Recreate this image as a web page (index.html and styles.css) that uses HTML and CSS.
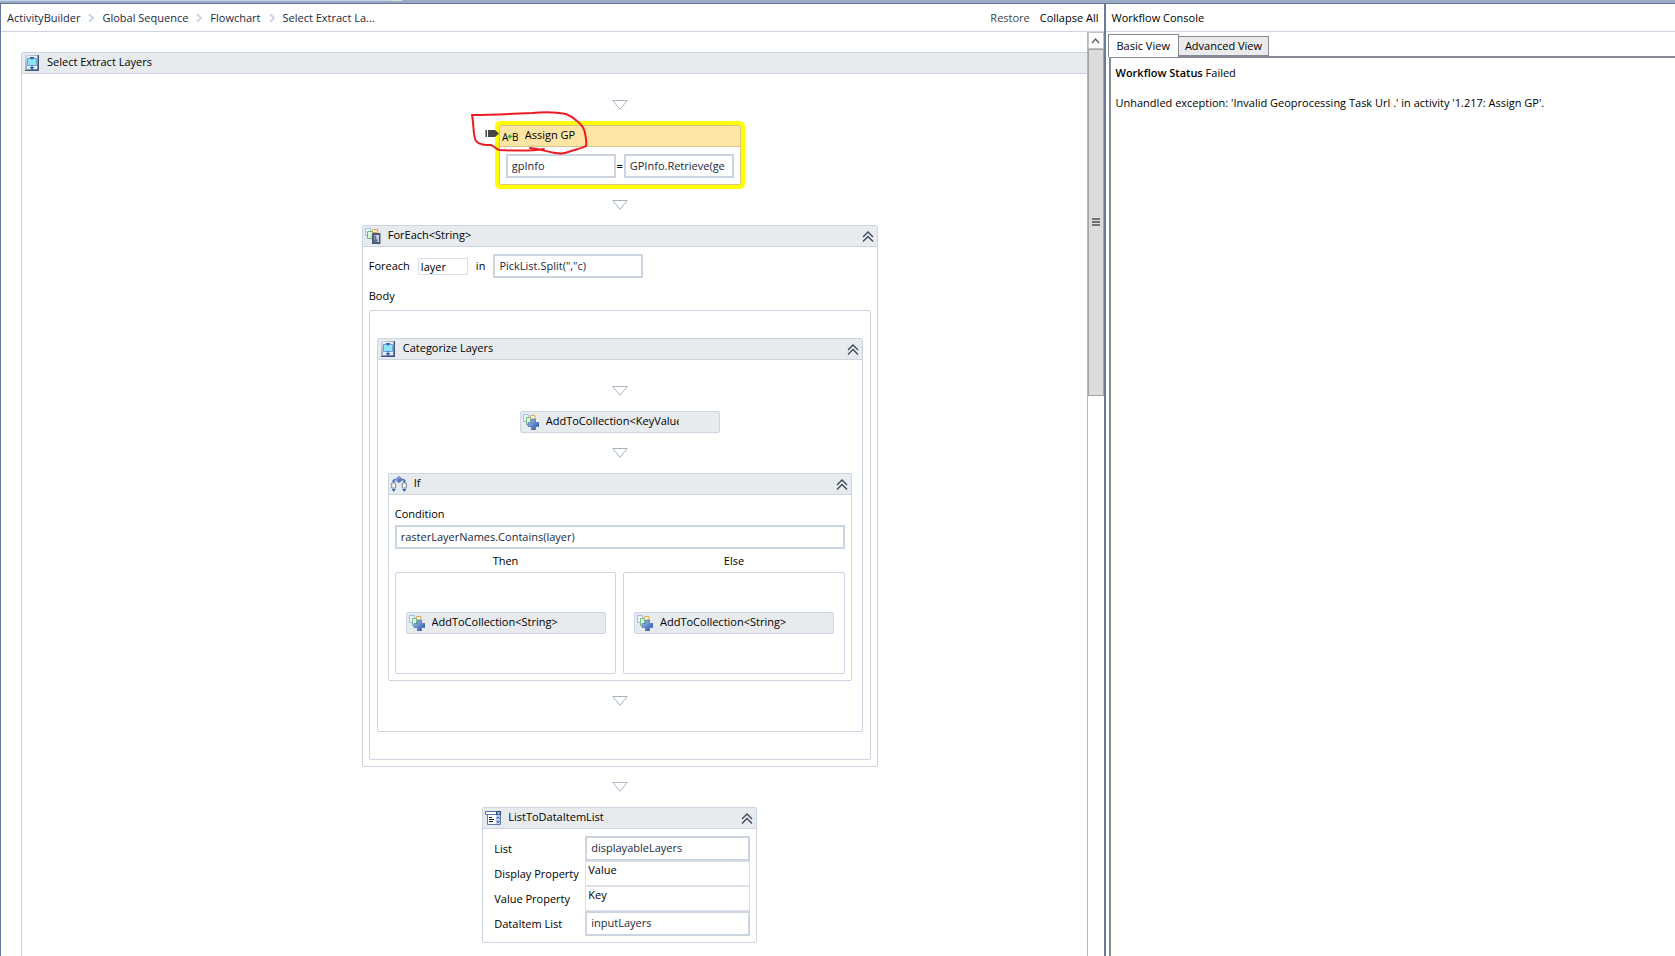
FILE: index.html
```
<!DOCTYPE html>
<html lang="en">
<head>
    <meta charset="UTF-8" />
    <title>Workflow Designer</title>
    <link rel="stylesheet" href="styles.css">
</head>

<body>
    <!-- shared icons -->
    <svg class="defs" width="0" height="0" aria-hidden="true">
        <defs>
            <linearGradient id="blue" x1="0" y1="0" x2="1" y2="1">
                <stop offset="0" stop-color="#a9c4f2" />
                <stop offset="1" stop-color="#234a9e" />
            </linearGradient>
            <linearGradient id="steel" x1="0" y1="0" x2="1" y2="1">
                <stop offset="0" stop-color="#d4deee" />
                <stop offset="1" stop-color="#566b98" />
            </linearGradient>
        </defs>
        <symbol id="down" viewBox="0 0 16 10">
            <path d="M.8.5h14.4L8 9.3z" fill="#fff" stroke="#a9b3c6" />
        </symbol>
        <symbol id="chevrons" viewBox="0 0 12 11">
            <path d="M1 6l5-5 5 5M1 10.500l5-5 5 5" fill="none" stroke="#3c475c" stroke-width="1.300" />
        </symbol>
        <symbol id="sequence" viewBox="0 0 16 16">
            <path d="M1 0h14v16H1z" fill="url(#steel)" />
            <path d="M14.500 0v15.500H1" fill="none" stroke="#43557c" />
            <path d="M3 1h10v13H3z" fill="#e6eefb" />
            <path d="M3.500 3.500h9v7h-9z" fill="#8fe4f4" stroke="#6d9fd0" />
            <path d="M5.500 2h5L8 5zM5.500 12h5L8 15z" fill="#2f5fc0" />
            <path d="M8 10v2" stroke="#2f5fc0" />
        </symbol>
        <symbol id="foreach" viewBox="0 0 16 16">
            <path d="M.5.5h5v7h-5z" fill="#eef4ff" stroke="#a9bfe2" />
            <path d="M2.500 3.500h5v7h-5z" fill="#d9f3dc" stroke="#62b877" />
            <path d="M7.500 1.500h5v3h-5z" fill="#fdf0cf" stroke="#d9a95a" />
            <path d="M7 5h8.500v11H7z" fill="#4c5a76" />
            <path d="M9 7h5v7H9z" fill="#c5d0e4" />
            <path d="M6.500 8.500h4v5M8.500 11.500l2 2.500 2-2.500" fill="none" stroke="#5c6c8c" stroke-width="1.500" />
        </symbol>
        <symbol id="add" viewBox="0 0 16 16">
            <path d="M.5.500h5v7h-5z" fill="#eef4ff" stroke="#a3bce4" />
            <path d="M7.500 1.500h4.500v5H7.500z" fill="#fdf0cf" stroke="#dcae5c" />
            <path d="M3.500 3.500h4v7h-4z" fill="#e3f6e5" stroke="#71bd86" />
            <path d="M8.500 5h4v3.500H16v4h-3.500V16h-4v-3.500H5v-4h3.500z" fill="url(#blue)" stroke="#3d66b4" stroke-width=".6" />
        </symbol>
        <symbol id="if" viewBox="0 0 16 16">
            <path d="M2.700 6V3.500h10.600V6" fill="none" stroke="#5d6f92" />
            <path d="M8 0l4 3.500L8 7 4 3.500z" fill="url(#blue)" stroke="#7086b4" stroke-width=".5" />
            <path d="M.7 7h4v5h-4zM11.300 7h4v5h-4z" fill="#fff" stroke="#7d8798" />
            <path d="M1 4.500h3.500L2.700 7zM11.500 4.500H15L13.300 7zM.8 13h3.900l-2 3zM11.300 13h4l-2 3z" fill="#2f5fc0" />
        </symbol>
        <symbol id="list" viewBox="0 0 16 14">
            <path d="M.5.5h15v3H.5z" fill="#fff" stroke="#4e70a8" />
            <path d="M2.500 3.500h13v10h-13z" fill="#fff" stroke="#5d7cb0" />
            <path d="M11 4h4v9h-4z" fill="#b9ccf0" />
            <path d="M11 0h5v4h-5z" fill="#33517f" />
            <path d="M12 1.500h3l-1.500 2z" fill="#fff" />
            <path d="M4 6.500h3M4 8.500h5M4 10.500h4" stroke="#222" />
            <path d="M12 7.500l1.200-1.500 1.300 1.500M12 10l1.200 1.500 1.300-1.500" fill="none" stroke="#223a6e" />
        </symbol>
    </svg>

    <div class="topstrip"><div class="topstrip-tab"></div></div>

    <div class="window">
        <main class="designer">
            <div class="bar">
                <nav class="crumbs">
                    <a href="#">ActivityBuilder</a>
                    <svg width="6" height="8" viewBox="0 0 6 8"><path d="M1 0l4 4-4 4" /></svg>
                    <a href="#">Global Sequence</a>
                    <svg width="6" height="8" viewBox="0 0 6 8"><path d="M1 0l4 4-4 4" /></svg>
                    <a href="#">Flowchart</a>
                    <svg width="6" height="8" viewBox="0 0 6 8"><path d="M1 0l4 4-4 4" /></svg>
                    <a href="#">Select Extract La...</a>
                </nav>
                <button type="button" class="restore">Restore</button>
                <button type="button">Collapse All</button>
            </div>

            <div class="viewport">
                <div class="canvas">
                    <section class="card root">
                        <header class="card-head"><svg class="icon"><use href="#sequence" /></svg><span class="title">Select Extract Layers</span></header>
                        <div class="flow">
                            <svg class="arrow"><use href="#down" /></svg>

                            <section class="card assign">
                                <header class="card-head">
                                    <svg class="icon" viewBox="0 0 16 16">
                                        <text x="0" y="13">A</text>
                                        <text x="10" y="13">B</text>
                                        <path d="M10.500 8.500h-4M8.500 6.500l-2 2 2 2" fill="none" stroke="#3fae49" stroke-width="1.300" />
                                    </svg>
                                    <span class="title">Assign GP</span>
                                </header>
                                <div class="assign-row">
                                    <input class="expr" type="text" value="gpInfo" aria-label="To">
                                    <span>=</span>
                                    <input class="expr" type="text" value="GPInfo.Retrieve(ge" aria-label="Value">
                                </div>
                                <svg class="pointer" width="14" height="8" viewBox="0 0 14 8"><path d="M0 0h1v7H0z" fill="#999" /><path d="M1 0h1v7H1zM3 0h7l4 3.500L10 7H3z" fill="#454545" /></svg>
                                <svg class="scribble" width="120" height="46" viewBox="0 0 120 46">
                                    <path d="M75 38c-12 2-24 2-45 1-3-1-5-4-8-5-6 0-12 0-15-4C4 26 5 14 3 4c20 0 40-1 60-2 12-1 24-1 34 1 5 2 8 4 11 7 4 3 7 6 8 12 1 6 2 10 1 13-3 2-9 3-15 5-6 2-8 3-16 2-8-1-14-4-25-5" fill="none" stroke="#ed1c24" stroke-width="2" stroke-linecap="round" stroke-linejoin="round" />
                                </svg>
                            </section>

                            <svg class="arrow"><use href="#down" /></svg>

                            <section class="card foreach">
                                <header class="card-head">
                                    <svg class="icon"><use href="#foreach" /></svg>
                                    <span class="title">ForEach&lt;String&gt;</span>
                                    <button type="button" class="fold" aria-label="Collapse"><svg width="12" height="11"><use href="#chevrons" /></svg></button>
                                </header>
                                <div class="foreach-body">
                                    <div class="foreach-row">
                                        <label for="item">Foreach</label>
                                        <input class="plain" id="item" type="text" value="layer">
                                        <label for="values">in</label>
                                        <input class="expr" id="values" type="text" value="PickList.Split(&quot;,&quot;c)">
                                    </div>
                                    <p class="body-label">Body</p>
                                    <div class="drop body-drop">
                                        <section class="card">
                                            <header class="card-head">
                                                <svg class="icon"><use href="#sequence" /></svg>
                                                <span class="title">Categorize Layers</span>
                                                <button type="button" class="fold" aria-label="Collapse"><svg width="12" height="11"><use href="#chevrons" /></svg></button>
                                            </header>
                                            <div class="flow">
                                                <svg class="arrow"><use href="#down" /></svg>
                                                <div class="activity"><svg class="icon"><use href="#add" /></svg><span class="title">AddToCollection&lt;KeyValuePair</span></div>
                                                <svg class="arrow"><use href="#down" /></svg>
                                                <section class="card if">
                                                    <header class="card-head">
                                                        <svg class="icon"><use href="#if" /></svg>
                                                        <span class="title">If</span>
                                                        <button type="button" class="fold" aria-label="Collapse"><svg width="12" height="11"><use href="#chevrons" /></svg></button>
                                                    </header>
                                                    <div class="if-body">
                                                        <label for="condition">Condition</label>
                                                        <input class="expr" id="condition" type="text" value="rasterLayerNames.Contains(layer)">
                                                        <div class="branches">
                                                            <div>
                                                                <h4>Then</h4>
                                                                <div class="drop branch"><div class="activity"><svg class="icon"><use href="#add" /></svg><span class="title">AddToCollection&lt;String&gt;</span></div></div>
                                                            </div>
                                                            <div>
                                                                <h4>Else</h4>
                                                                <div class="drop branch"><div class="activity"><svg class="icon"><use href="#add" /></svg><span class="title">AddToCollection&lt;String&gt;</span></div></div>
                                                            </div>
                                                        </div>
                                                    </div>
                                                </section>
                                                <svg class="arrow"><use href="#down" /></svg>
                                            </div>
                                        </section>
                                    </div>
                                </div>
                            </section>

                            <svg class="arrow"><use href="#down" /></svg>

                            <section class="card datalist">
                                <header class="card-head">
                                    <svg class="icon"><use href="#list" /></svg>
                                    <span class="title">ListToDataItemList</span>
                                    <button type="button" class="fold" aria-label="Collapse"><svg width="12" height="11"><use href="#chevrons" /></svg></button>
                                </header>
                                <div class="props">
                                    <label for="list">List</label>
                                    <input class="expr" id="list" type="text" value="displayableLayers">
                                    <label for="display">Display Property</label>
                                    <input class="plain" id="display" type="text" value="Value">
                                    <label for="value">Value Property</label>
                                    <input class="plain" id="value" type="text" value="Key">
                                    <label for="items">DataItem List</label>
                                    <input class="expr" id="items" type="text" value="inputLayers">
                                </div>
                            </section>
                        </div>
                    </section>
                </div>

                <div class="scroll">
                    <button type="button" class="scroll-up" aria-label="Scroll up"><svg width="9" height="6" viewBox="0 0 9 6"><path d="M1 5l3.500-4L8 5" fill="none" stroke="#606060" stroke-width="1.300" /></svg></button>
                    <div class="thumb"><i></i><i></i><i></i></div>
                </div>
            </div>
        </main>

        <aside class="console">
            <div class="bar">Workflow Console</div>
            <div class="tabs">
                <button type="button" class="tab active">Basic View</button>
                <button type="button" class="tab">Advanced View</button>
            </div>
            <div class="output">
                <p><b>Workflow Status</b> Failed</p>
                <p>Unhandled exception: 'Invalid Geoprocessing Task Url .' in activity '1.217: Assign GP'.</p>
            </div>
        </aside>
    </div>
</body>

</html>
```
FILE: styles.css
```
*{
    margin: 0;
    padding: 0;
    box-sizing: border-box;
}
body{
    display: flex;
    flex-direction: column;
    height: 100vh;
    overflow: hidden;
    font: 11px/16px "Open Sans", "Noto Sans", sans-serif;
    color: #000;
    background-color: #fff;
}
button,input{
    font: inherit;
    color: inherit;
    border: 0;
    border-radius: 0;
    background: none;
}
a{
    color: #1b293e;
    text-decoration: none;
}
svg{
    display: block;
    flex: none;
}
.defs{
    position: absolute;
}

.topstrip{
    flex: none;
    height: 4px;
    background-color: #9ba9c3;
    border-bottom: 1px solid #64769a;
}
.topstrip-tab{
    width: 24%;
    height: 1px;
    background-color: #c3d3ea;
    border-right: 11px solid #dedcd6;
}
.window{
    flex: 1;
    display: flex;
    min-height: 0;
}
.designer{
    flex: 0 0 66%;
    display: flex;
    flex-direction: column;
    min-width: 0;
    border-left: 1px solid #64769a;
    border-right: 2px solid #6b7c9b;
}
.bar{
    flex: none;
    display: flex;
    align-items: center;
    gap: 10px;
    height: 28px;
    padding: 0 5px 0 6px;
    border-bottom: 1px solid #ccd3e2;
}
.crumbs{
    display: flex;
    align-items: center;
    gap: 8px;
    margin-right: auto;
}
.crumbs path{
    fill: none;
    stroke: #ccd3e2;
    stroke-width: 2;
}
.restore{
    color: #444;
}

.viewport{
    flex: 1;
    display: flex;
    min-height: 0;
}
.canvas{
    flex: 1;
    min-width: 0;
    padding: 20px 0 0 20px;
    overflow: hidden;
}

/* activity cards */
.card{
    border: 1px solid #cdd4e2;
    border-radius: 2px;
    background-color: #fff;
}
.card-head,.activity{
    display: flex;
    align-items: center;
    gap: 7px;
    height: 21px;
    padding: 0 3px 0 2px;
    background-color: #e8ebee;
}
.card-head{
    border-bottom: 1px solid #cdd4e2;
}
.activity{
    width: 200px;
    height: 22px;
    border: 1px solid #cdd4e2;
    border-radius: 2px;
}
.icon{
    width: 16px;
    height: 16px;
}
.title{
    padding-bottom: 2px;
    white-space: nowrap;
    overflow: hidden;
}
.activity .title{
    max-width: 133px;
}
.fold{
    margin-left: auto;
}
.flow{
    display: flex;
    flex-direction: column;
    align-items: center;
    gap: 15px;
    padding: 26px 10px 25px;
}
.arrow{
    width: 16px;
    height: 10px;
}
.root{
    margin-right: -132px;
    padding-bottom: 60px;
}

.expr{
    min-width: 0;
    height: 24px;
    padding: 0 4px 2px;
    color: #1b293e;
    border: 2px solid #cdd4e2;
}
.plain{
    min-width: 0;
    padding: 0 2px;
    border: 1px solid #dcdfe8;
}
.drop{
    border: 1px solid #cdd4e2;
    border-radius: 2px;
}

.assign{
    position: relative;
    width: 242px;
    height: 60px;
    border-color: #d9c48c;
    box-shadow: 0 0 0 4px #ff0;
}
.assign .card-head{
    background-color: #ffe5a3;
    border-color: #d9c48c;
}
.assign text{
    font: 10px "Open Sans", sans-serif;
}
.assign-row{
    display: flex;
    align-items: center;
    padding: 7px 6px;
}
.assign-row .expr{
    flex: 1;
}
.assign-row span{
    width: 8px;
    font-weight: 600;
    text-align: center;
}
.pointer{
    position: absolute;
    left: -15px;
    top: 4px;
}
.scribble{
    position: absolute;
    left: -31px;
    top: -15px;
}

.foreach{
    width: 516px;
}
.foreach-body{
    padding: 7px 6px 6px;
}
.foreach-row{
    display: flex;
    align-items: center;
    gap: 8px;
}
.foreach-row .plain{
    width: 50px;
    height: 17px;
}
.foreach-row .expr{
    width: 150px;
}
.body-label{
    padding: 10px 0 6px;
}
.body-drop{
    padding: 27px 7px;
}
.if{
    width: 100%;
}
.if-body{
    padding: 11px 6px 6px;
}
.if-body label{
    display: block;
}
.if-body .expr{
    width: 100%;
    margin-top: 3px;
}
.branches{
    display: flex;
    gap: 7px;
}
.branches > div{
    flex: 1;
}
.branches h4{
    padding: 4px 0 3px;
    font-weight: normal;
    text-align: center;
}
.branch{
    display: flex;
    align-items: center;
    justify-content: center;
    height: 102px;
}

.datalist{
    width: 275px;
}
.props{
    display: grid;
    grid-template-columns: 91px 1fr;
    grid-auto-rows: 25px;
    align-items: center;
    padding: 7px 6px 6px 11px;
}
.props .plain{
    height: 25px;
    padding-bottom: 9px;
}
.props .expr{
    height: 25px;
}

/* scroll bar */
.scroll{
    width: 17px;
    border-left: 1px solid #b5b5b5;
}
.scroll-up{
    display: flex;
    align-items: center;
    justify-content: center;
    width: 100%;
    height: 17px;
    border: 1px solid #c3c3c3;
}
.thumb{
    display: flex;
    flex-direction: column;
    align-items: center;
    justify-content: center;
    gap: 1px;
    height: 37.5%;
    background-color: #dcdcdc;
    border: 1px solid #a3a3a3;
}
.thumb i{
    width: 8px;
    height: 2px;
    background-color: #737373;
}

/* console */
.console{
    flex: 1;
    display: flex;
    flex-direction: column;
    min-width: 0;
}
.tabs{
    display: flex;
    align-items: flex-end;
    padding: 2px 0 0 2px;
}
.tab{
    height: 20px;
    padding: 0 6px;
    background-color: #ebebeb;
    border: 1px solid #868a96;
}
.tab.active{
    z-index: 1;
    height: 23px;
    margin: 0 -1px -1px 0;
    padding: 0 8px;
    background-color: #fff;
    border-bottom: 0;
}
.output{
    flex: 1;
    margin-left: 3px;
    padding: 7px 5px;
    border-top: 2px solid #868a96;
    border-left: 2px solid #868a96;
}
.output p{
    margin-bottom: 14px;
}
.output b{
    font-weight: 600;
}
```
